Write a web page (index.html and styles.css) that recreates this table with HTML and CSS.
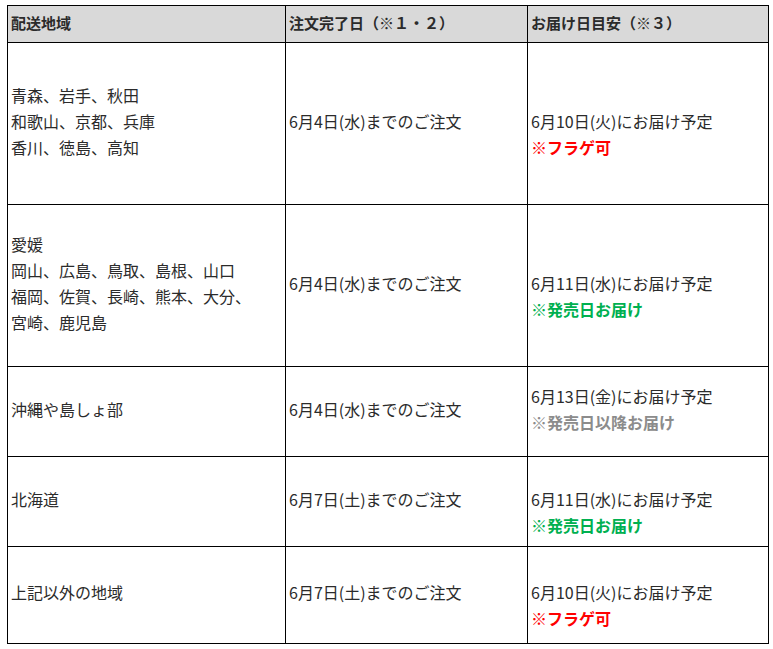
FILE: index.html
```html
<!DOCTYPE html>
<html lang="ja">
<head>
<meta charset="utf-8">
<title>配送スケジュール</title>
<link rel="stylesheet" href="styles.css">
</head>
<body>
<div class="wrap">
<table class="ship">
  <colgroup>
    <col class="c1"><col class="c2"><col class="c3">
  </colgroup>
  <thead>
    <tr class="r-head">
      <th>配送地域</th>
      <th>注文完了日（※１・２）</th>
      <th>お届け日目安（※３）</th>
    </tr>
  </thead>
  <tbody>
    <tr class="r-tall">
      <td>青森、岩手、秋田<br>和歌山、京都、兵庫<br>香川、徳島、高知</td>
      <td>6月4日(水)までのご注文</td>
      <td><br>6月10日(火)にお届け予定<br><span class="note red">※フラゲ可</span></td>
    </tr>
    <tr class="r-tall">
      <td>愛媛<br>岡山、広島、鳥取、島根、山口<br>福岡、佐賀、長崎、熊本、大分、<br>宮崎、鹿児島</td>
      <td>6月4日(水)までのご注文</td>
      <td><br>6月11日(水)にお届け予定<br><span class="note green">※発売日お届け</span></td>
    </tr>
    <tr class="r-short">
      <td>沖縄や島しょ部</td>
      <td>6月4日(水)までのご注文</td>
      <td>6月13日(金)にお届け予定<br><span class="note gray">※発売日以降お届け</span></td>
    </tr>
    <tr class="r-short">
      <td>北海道</td>
      <td>6月7日(土)までのご注文</td>
      <td><br>6月11日(水)にお届け予定<br><span class="note green">※発売日お届け</span></td>
    </tr>
    <tr class="r-last">
      <td>上記以外の地域</td>
      <td>6月7日(土)までのご注文</td>
      <td><br>6月10日(火)にお届け予定<br><span class="note red">※フラゲ可</span></td>
    </tr>
  </tbody>
</table>
</div>
</body>
</html>
```

FILE: styles.css
```css
html, body {
  margin: 0;
  padding: 0;
  background: #ffffff;
}

.wrap {
  padding: 5px 0 0 7px;
}

.ship {
  border-collapse: collapse;
  width: 761px;
  table-layout: fixed;
  font-family: "Noto Sans CJK JP", "Noto Sans", sans-serif;
  color: #2b2b2b;
}

.c1 { width: 278px; }
.c2 { width: 242px; }
.c3 { width: 241px; }

.ship th,
.ship td {
  border: 1px solid #000000;
  text-align: left;
  vertical-align: middle;
}

.ship th {
  background: #d9d9d9;
  font-size: 15px;
  font-weight: bold;
  line-height: 20px;
  padding: 0 3px 2px;
}

.ship td {
  font-size: 16px;
  line-height: 26px;
  padding: 0 3px 6px;
}

.r-head { height: 37px; }
.r-tall { height: 162px; }
.r-short { height: 90px; }
.r-last { height: 97px; }

.note {
  font-weight: bold;
}

.red { color: #ff0000; }
.green { color: #00b050; }
.gray { color: #8c8c8c; }
```
